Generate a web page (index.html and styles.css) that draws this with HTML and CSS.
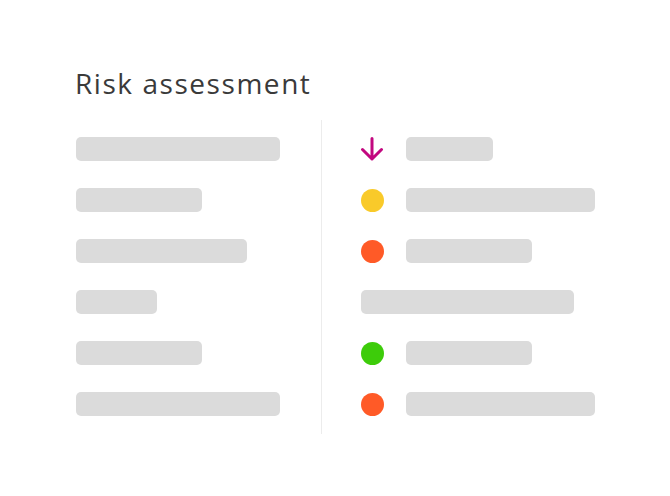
FILE: index.html
```html
<!DOCTYPE html>
<html>
<head>
<meta charset="utf-8">
<link rel="stylesheet" href="styles.css">
</head>
<body>
<div class="card">
  <h1 class="title">Risk assessment</h1>
  <div class="cols">
    <div class="col left">
      <div class="row"><div class="bar" style="width:204px"></div></div>
      <div class="row"><div class="bar" style="width:126px"></div></div>
      <div class="row"><div class="bar" style="width:171px"></div></div>
      <div class="row"><div class="bar" style="width:81px"></div></div>
      <div class="row"><div class="bar" style="width:126px"></div></div>
      <div class="row"><div class="bar" style="width:204px"></div></div>
    </div>
    <div class="divider"></div>
    <div class="col right">
      <div class="row">
        <span class="icon">
          <svg width="24" height="24" viewBox="0 0 24 24"><path d="M12 1.5V22M2.5 12.5L12 22L21.5 12.5" fill="none" stroke="#c2087f" stroke-width="3" stroke-linecap="round" stroke-linejoin="round"/></svg>
        </span>
        <div class="bar" style="width:87px"></div>
      </div>
      <div class="row"><span class="icon"><span class="dot yellow"></span></span><div class="bar" style="width:189px"></div></div>
      <div class="row"><span class="icon"><span class="dot orange"></span></span><div class="bar" style="width:126px"></div></div>
      <div class="row"><div class="bar" style="width:213px"></div></div>
      <div class="row"><span class="icon"><span class="dot green"></span></span><div class="bar" style="width:126px"></div></div>
      <div class="row"><span class="icon"><span class="dot orange"></span></span><div class="bar" style="width:189px"></div></div>
    </div>
  </div>
</div>
</body>
</html>
```
FILE: styles.css
```css
html, body {
  margin: 0;
  padding: 0;
  background: #ffffff;
}
.card {
  width: 670px;
  height: 496px;
  padding: 64px 0 0 75px;
  box-sizing: border-box;
  font-family: "Open Sans", "Liberation Sans", sans-serif;
}
.title {
  margin: 0;
  font-size: 28px;
  font-weight: 500;
  line-height: 38px;
  color: #3a3a3a;
  letter-spacing: 1.55px;
}
.cols {
  display: flex;
  margin-top: 18px;
}
.col {
  display: flex;
  flex-direction: column;
  gap: 27px;
  padding: 17px 0 18px;
}
.left {
  width: 246px;
  padding-left: 1px;
  box-sizing: border-box;
}
.divider {
  width: 1px;
  background: #ececec;
}
.right {
  padding-left: 39px;
}
.row {
  display: flex;
  align-items: center;
  height: 24px;
}
.bar {
  height: 24px;
  border-radius: 5px;
  background: #dbdbdb;
}
.icon {
  width: 24px;
  height: 24px;
  margin: 0 22px 0 -1px;
  display: flex;
  align-items: center;
  justify-content: center;
}
.dot {
  width: 23px;
  height: 23px;
  border-radius: 50%;
}
.yellow { background: #f9ca2a; }
.orange { background: #ff5a27; }
.green { background: #3dcc0a; }
```
